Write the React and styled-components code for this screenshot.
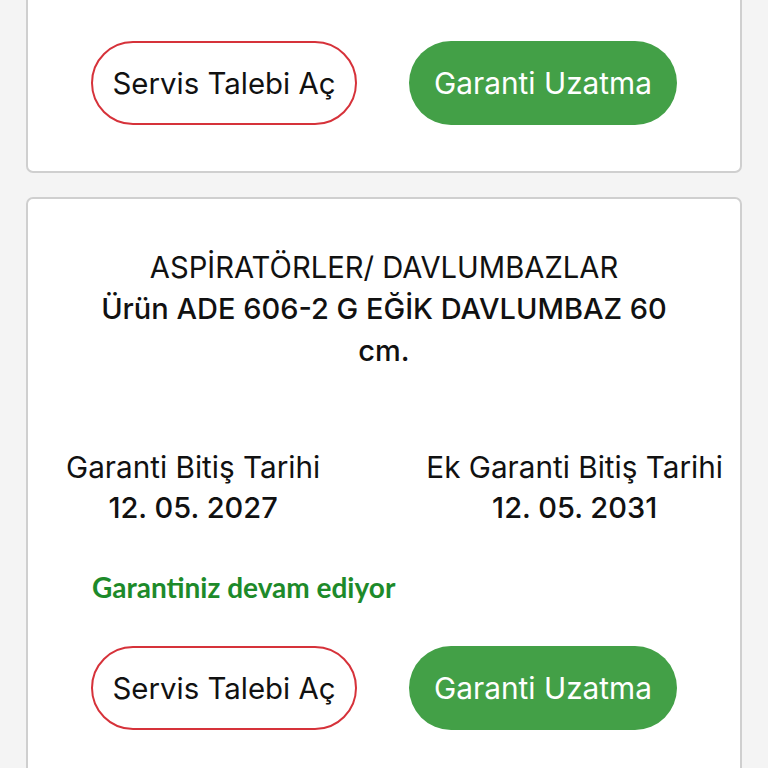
import React from "react";
import styled, { createGlobalStyle } from "styled-components";

const Global = createGlobalStyle`
  html, body { margin: 0; padding: 0; background: #f4f4f4; }
  body { font-family: Inter, Roboto, "Liberation Sans", sans-serif; color: #111; }
`;

const Page = styled.div`
  padding: 0 26px;
  margin-top: -30px;
  display: flex;
  flex-direction: column;
  gap: 24px;
`;

const Card = styled.div`
  background: #fff;
  border: 2px solid #cfcfcf;
  border-radius: 7px;
  padding: ${(p) => p.$pad};
`;

const Buttons = styled.div`
  display: flex;
  justify-content: center;
  gap: 52px;
`;

const Pill = styled.button`
  width: ${(p) => p.$w}px;
  height: 84px;
  border-radius: 42px;
  box-sizing: border-box;
  padding: 0;
  font-family: Inter, Roboto, "Liberation Sans", sans-serif;
  font-size: ${(p) => (p.$primary ? "29.8px" : "29.4px")};
  cursor: pointer;
  border: ${(p) => (p.$primary ? "none" : "2px solid #d6323a")};
  background: ${(p) => (p.$primary ? "#43a047" : "#fff")};
  color: ${(p) => (p.$primary ? "#fff" : "#111")};
`;

const Category = styled.div`
  text-align: center;
  font-size: 29.2px;
  line-height: 40px;
`;

const Product = styled.div`
  text-align: center;
  font-size: 29px;
  font-weight: 500;
  line-height: 42px;
  margin: 0 auto;
  max-width: 610px;
`;

const Dates = styled.div`
  display: flex;
  justify-content: space-between;
  padding: 0 17px 0 38px;
  margin-top: 75px;
`;

const DateCol = styled.div`
  text-align: center;
`;

const DateLabel = styled.div`
  font-size: 29.7px;
  line-height: 40px;
`;

const DateValue = styled.div`
  font-size: 29px;
  font-weight: 500;
  line-height: 42px;
`;

const Status = styled.div`
  font-family: Lato, "Open Sans", sans-serif;
  font-weight: 700;
  font-size: 28px;
  line-height: 34px;
  color: #1d8a2a;
  padding-left: 64px;
  margin: 41px 0 42px;
`;

function ActionButtons() {
  return (
    <Buttons>
      <Pill $w={266}>Servis Talebi Aç</Pill>
      <Pill $w={268} $primary>Garanti Uzatma</Pill>
    </Buttons>
  );
}

export default function App() {
  return (
    <>
      <Global />
      <Page>
        <Card $pad="69px 0 46px">
          <ActionButtons />
        </Card>
        <Card $pad="49px 0 60px">
          <Category>ASPİRATÖRLER/ DAVLUMBAZLAR</Category>
          <Product>Ürün ADE 606-2 G EĞİK DAVLUMBAZ 60 cm.</Product>
          <Dates>
            <DateCol>
              <DateLabel>Garanti Bitiş Tarihi</DateLabel>
              <DateValue>12. 05. 2027</DateValue>
            </DateCol>
            <DateCol>
              <DateLabel>Ek Garanti Bitiş Tarihi</DateLabel>
              <DateValue>12. 05. 2031</DateValue>
            </DateCol>
          </Dates>
          <Status>Garantiniz devam ediyor</Status>
          <ActionButtons />
        </Card>
      </Page>
    </>
  );
}
